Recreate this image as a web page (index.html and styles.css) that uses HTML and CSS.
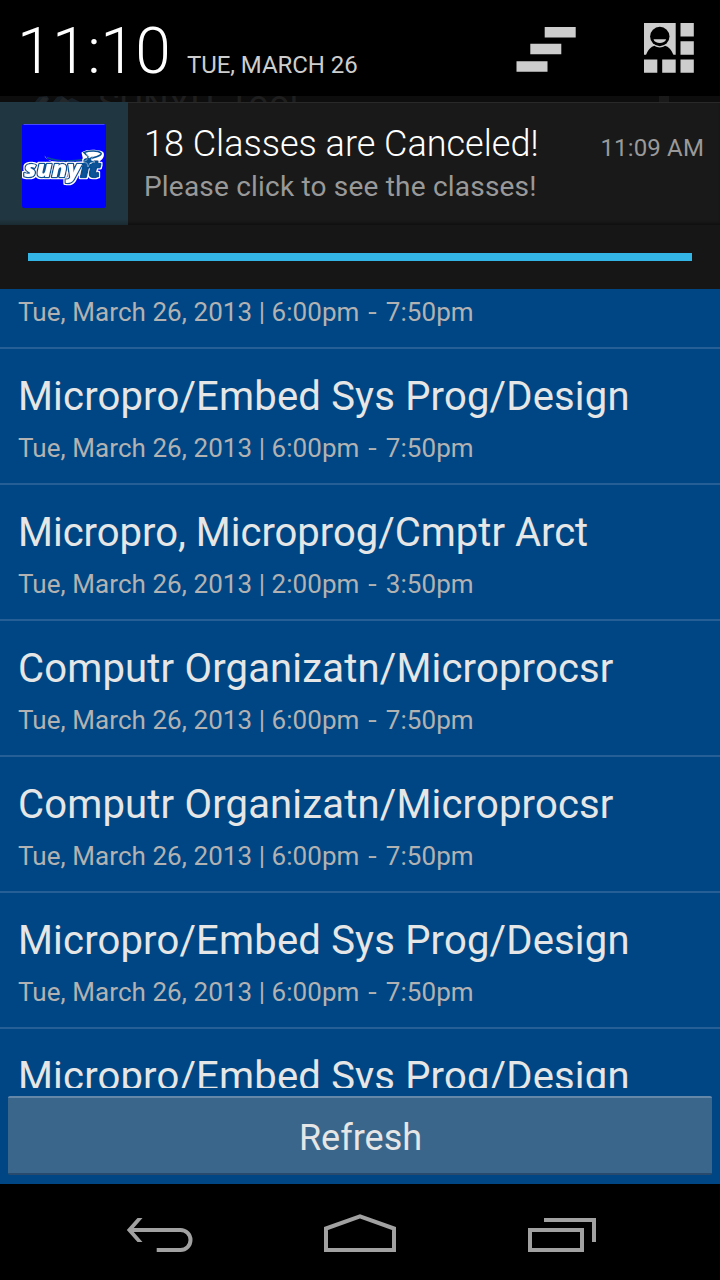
FILE: index.html
```html
<!DOCTYPE html>
<html lang="en">
<head>
<meta charset="utf-8">
<title>Canceled Classes</title>
<link rel="stylesheet" href="styles.css">
</head>
<body>
<div class="screen">
  <header class="shade-header">
    <span class="clock">11:10</span>
    <span class="date">TUE, MARCH 26</span>
    <svg class="shade-icons" width="200" height="60" viewBox="510 20 200 60">
      <g fill="#cdcdcd">
        <path d="M544.7 27h31v10.500h-31zM530.300 43.800h31v10.500h-31zM516.500 61.200h31v10.500h-31z"/>
        <path d="M644 23h31.700v31.700h-31.700zM680.500 23h13.300v13.500h-13.300zM680.500 41.200h13.300v13.500h-13.300zM680.500 59.500h13.300v13.300h-13.300zM662.200 59.500h13.500v13.300h-13.500zM644 59.500h13.300v13.300h-13.300z"/>
      </g>
      <path d="M646 55c2-5 5-8.500 8.500-9.200 3 2.200 7.500 2.200 10.500 0 3.500.7 6.500 4.200 8.500 9.200z"/>
      <circle cx="659.800" cy="36.500" r="9.700"/>
      <path d="M653.500 39.300h12.600c-1.200 5-11.400 5-12.600 0z" fill="#cdcdcd"/>
    </svg>
  </header>
  <div class="app-bar">
    <svg class="app-mark" width="52" height="6" viewBox="0 0 52 6"><path d="M3 6 7 1l8-1 2 3-2 3zM21 6l4-5 5-1 6 4 4-2 8 4z" fill="#182027"/><path d="M7 6l4-5 5 1-2 4zM27 6l4-5 7 5z" fill="#24272a"/></svg>
    <span class="app-title">SUNYIT Tool</span>
    <span class="app-overflow"></span>
  </div>
  <section class="notification">
    <div class="notification-icon">
      <svg width="86" height="86" viewBox="0 0 86 86">
        <defs>
          <filter id="rim" x="-10%" y="-10%" width="120%" height="120%">
            <feMorphology in="SourceAlpha" operator="dilate" radius="1" result="grown"/>
            <feFlood flood-color="#fff"/>
            <feComposite in2="grown" operator="in" result="white"/>
            <feMerge><feMergeNode in="white"/><feMergeNode in="SourceGraphic"/></feMerge>
          </filter>
        </defs>
        <rect x="1" y="1" width="84" height="84" rx="2" fill="#00f"/>
        <path d="M2.500 1.500h81" stroke="#4548ff"/>
        <path d="M23.500 32.500c1 5 10 7 22 7l17-1-2-9c6-4 19-3 22 0 2 5-3 9-8 11-14 3-44 5-51-8z" fill="#fff"/>
        <path d="M26 34.500c11 4.500 25 4 37 2 9-1 19-4 17-6.500-3-2.500-11-2.500-17-.5l8 8-9 2" fill="none" stroke="#075196" stroke-width="1.500"/>
        <g class="logo-word" filter="url(#rim)">
          <text x="3" y="53.500" textLength="76" lengthAdjust="spacingAndGlyphs" class="logo-text">suny<tspan class="logo-it">it</tspan></text>
        </g>
        <path d="m66 31 2 4 4-2-2 4 4 2-5 1-2 4-1-4-5-1 5-2z" fill="#075196" stroke="#fff" stroke-width=".4"/>
      </svg>
    </div>
    <div class="notification-body">
      <div class="notification-top">
        <span class="notification-title">18 Classes are Canceled!</span>
        <span class="notification-time">11:09 AM</span>
      </div>
      <div class="notification-text">Please click to see the classes!</div>
    </div>
  </section>
  <div class="shade-handle"><div class="handle-line"></div></div>
  <main class="classes">
    <article class="class-row class-row-first"><p class="when">Tue, March 26, 2013 | 6:00pm <span class="dash">-</span> 7:50pm</p></article>
    <article class="class-row"><h2 class="name name-wide">Micropro/Embed Sys Prog/Design</h2><p class="when">Tue, March 26, 2013 | 6:00pm <span class="dash">-</span> 7:50pm</p></article>
    <article class="class-row"><h2 class="name">Micropro, Microprog/Cmptr Arct</h2><p class="when">Tue, March 26, 2013 | 2:00pm <span class="dash">-</span> 3:50pm</p></article>
    <article class="class-row"><h2 class="name name-wide">Computr Organizatn/Microprocsr</h2><p class="when">Tue, March 26, 2013 | 6:00pm <span class="dash">-</span> 7:50pm</p></article>
    <article class="class-row"><h2 class="name name-wide">Computr Organizatn/Microprocsr</h2><p class="when">Tue, March 26, 2013 | 6:00pm <span class="dash">-</span> 7:50pm</p></article>
    <article class="class-row"><h2 class="name name-wide">Micropro/Embed Sys Prog/Design</h2><p class="when">Tue, March 26, 2013 | 6:00pm <span class="dash">-</span> 7:50pm</p></article>
    <article class="class-row"><h2 class="name name-wide">Micropro/Embed Sys Prog/Design</h2></article>
  </main>
  <footer class="actions"><button class="refresh">Refresh</button></footer>
  <nav class="nav-bar">
    <svg width="720" height="96" viewBox="0 1184 720 96" fill="none" stroke="#a1a1a1" stroke-width="4">
      <path d="M130 1230h50.500a10 10 0 0 1 0 20H156.700"/>
      <path d="M137.500 1218h5l-10.500 12 10.500 12h-5l-10.700-12z" fill="#a1a1a1" stroke="none"/>
      <path d="M326 1250v-21.500l34-12.200 34 12.200v21.500z"/>
      <path d="M530 1230h52v20h-52zM544 1220h50v22"/>
    </svg>
  </nav>
</div>
</body>
</html>
```
FILE: styles.css
```css
* { box-sizing: border-box; }
body { margin: 0; background: #000; font-family: Roboto, "Liberation Sans", sans-serif; }
.screen { display: flex; flex-direction: column; width: 720px; height: 1280px; overflow: hidden; background: #000; }
.shade-header { display: flex; align-items: baseline; flex: none; height: 96px; padding-left: 17px; padding-top: 14px; white-space: nowrap; }
.clock { font-size: 64px; font-weight: 300; line-height: 75px; letter-spacing: -.4px; color: #fff; width: 170px; }
.date { font-size: 24px; line-height: 28px; letter-spacing: -.07px; color: #cdcdcd; }
.shade-icons { align-self: flex-start; margin: 6px 10px 0 auto; }
.app-bar { display: flex; flex: none; height: 6px; overflow: hidden; background: #0d0d0d; padding-left: 32px; }
.app-mark { flex: none; }
.app-title { margin: -13px 0 0 14px; font-size: 36px; line-height: 42px; letter-spacing: .1px; color: #1f1f1f; white-space: nowrap; }
.app-overflow { width: 10px; height: 6px; margin-left: auto; margin-right: 51px; background: #1a1a1a; }
.notification { display: flex; flex: none; height: 123px; background: #191919; border-top: 1px solid #292929; box-shadow: inset 0 -3px 3px -1px #101010; }
.notification-icon { width: 128px; height: 123px; margin-top: -1px; padding: 21px; background: linear-gradient(#203843 0 1px, #203640 2px 117px, #1a2a32); }
.notification-icon svg { display: block; }
.logo-word { font: italic 800 22px "Open Sans", sans-serif; }
.logo-text { fill: #fff; stroke: #075196; stroke-width: 2.4px; stroke-linejoin: round; paint-order: stroke; }
.logo-it { fill: #075196; }
.notification-body { flex: 1; padding: 20px 16px 0 16px; white-space: nowrap; }
.notification-top { display: flex; justify-content: space-between; align-items: baseline; }
.notification-title { font-size: 36px; font-weight: 300; line-height: 43px; color: #fff; }
.notification-time { font-size: 24px; line-height: 28px; letter-spacing: .15px; color: #999; }
.notification-text { font-size: 28px; line-height: 33px; margin-top: 4px; letter-spacing: .2px; color: #999; }
.shade-handle { flex: none; height: 64px; padding: 28px 28px 0; background: #161616; }
.handle-line { height: 8px; background: #33b5e5; }
.classes { flex: none; height: 799px; overflow: hidden; background: #004684; }
.class-row { height: 136px; padding: 24px 18px 0; border-bottom: 2px solid #265f95; white-space: nowrap; }
.class-row-first { height: 60px; padding-top: 8px; }
.name { margin: 0; font-size: 40px; font-weight: 400; line-height: 47px; color: #e6e6e6; }
.name-wide { letter-spacing: .18px; }
.when { margin: 0; font-size: 26px; line-height: 30px; letter-spacing: .06px; color: #b2b2b2; }
.dash { display: inline-block; margin: 0 3px; transform: scaleX(1.2); }
.name + .when { margin-top: 13px; }
.actions { flex: none; height: 96px; padding: 8px; background: #004684; }
.refresh { display: block; width: 704px; height: 79px; border: 0; border-radius: 2px; border-top: 2px solid #6587a8; border-bottom: 2px solid #284b6d; background: #3b668b; color: #e6e6e6; font: 36px/42px Roboto, "Liberation Sans", sans-serif; padding: 5px 0 0 1px; }
.nav-bar { flex: none; height: 96px; }
.nav-bar svg { display: block; }
```
